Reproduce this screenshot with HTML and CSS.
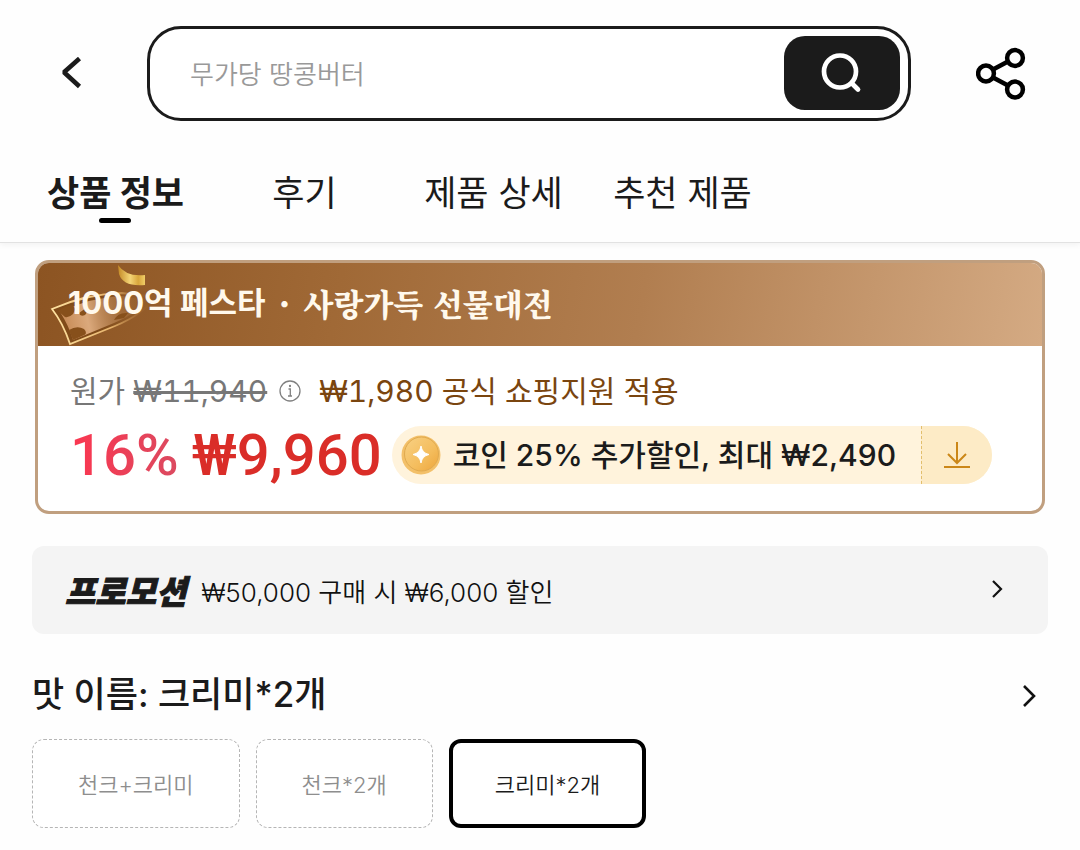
FILE: index.html
```html
<!DOCTYPE html>
<html lang="ko">
<head>
<meta charset="utf-8">
<meta name="viewport" content="width=device-width, initial-scale=1">
<title>상품 정보</title>
<link rel="stylesheet" href="styles.css">
</head>
<body>
<header class="header">
  <div class="topbar">
    <button class="icon-button back" type="button" aria-label="뒤로">
      <svg width="22" height="34" viewBox="0 0 22 34" fill="none" stroke="#1b1b1b" stroke-width="4.600" stroke-linejoin="bevel"><path d="M19.500 1.500 4 15.300 19.500 29.500"/></svg>
    </button>
    <form class="search" role="search">
      <input class="search-input" type="text" placeholder="무가당 땅콩버터" aria-label="검색어">
      <button class="search-button" type="button" aria-label="검색">
        <svg width="42" height="42" viewBox="0 0 42 42" fill="none" stroke="#fff" stroke-width="4.700" stroke-linecap="round"><circle cx="19" cy="19.500" r="16"/><path d="m31.500 32 5.500 5.500"/></svg>
      </button>
    </form>
    <button class="icon-button share" type="button" aria-label="공유">
      <svg width="50" height="54" viewBox="0 0 50 54" fill="none" stroke="#000" stroke-width="4.500"><circle cx="10" cy="26.500" r="7.900"/><circle cx="39" cy="11" r="7.900"/><circle cx="39" cy="42.500" r="7.900"/><path d="m17 22.500 15-8M17 30.500l15 8"/></svg>
    </button>
  </div>
  <nav class="tabs">
    <a class="tab tab-active" href="#info" aria-current="page">상품 정보</a>
    <a class="tab" href="#reviews">후기</a>
    <a class="tab" href="#detail">제품 상세</a>
    <a class="tab" href="#related">추천 제품</a>
  </nav>
</header>
<main class="content">
  <section class="deal" id="info">
    <div class="banner">
      <svg class="banner-art" width="140" height="83" viewBox="0 0 140 83" fill="none" aria-hidden="true">
        <defs>
          <linearGradient id="bill" x1="16" y1="60" x2="110" y2="40" gradientUnits="userSpaceOnUse"><stop stop-color="#c08048"/><stop offset=".35" stop-color="#dba97c"/><stop offset="1" stop-color="#a66c36" stop-opacity="0"/></linearGradient>
          <linearGradient id="edge" x1="14" y1="50" x2="112" y2="45" gradientUnits="userSpaceOnUse"><stop stop-color="#ffe2a0"/><stop offset=".6" stop-color="#e6b36c"/><stop offset="1" stop-color="#a66c36" stop-opacity="0"/></linearGradient>
          <linearGradient id="shade" x1="14" y1="50" x2="112" y2="45" gradientUnits="userSpaceOnUse"><stop stop-color="#804b19"/><stop offset=".5" stop-color="#804b19"/><stop offset="1" stop-color="#93602d" stop-opacity="0"/></linearGradient>
          <linearGradient id="ribbon" x1="80" y1="0" x2="107" y2="0" gradientUnits="userSpaceOnUse"><stop stop-color="#c48a26"/><stop offset=".45" stop-color="#f4d577"/><stop offset=".75" stop-color="#d9a63b"/><stop offset="1" stop-color="#f0ce68"/></linearGradient>
        </defs>
        <path d="M14 46Q48 31 84 30L117 34Q106 51 77 63L32 81Q25 60 14 46Z" fill="url(#shade)"/>
        <path d="M22 49Q54 34 84 33L108 37Q100 50 76 60L35 77Q31 63 22 49Z" fill="url(#bill)"/>
        <path d="M20 48q7-5 14-6 5 3 1 9-4 4-8 3M31 67q8-5 15-1 5 5-2 7l-9 4M41 50q1 4 6 2 3-3 1-7M76 57q4-8 14-7l-4 5" fill="#87501b"/>
        <path d="M14 46Q48 31 84 30L117 34Q106 51 77 63L32 81Q25 60 14 46Z" stroke="url(#edge)" stroke-width="1.800"/>
        <path d="M80 2q8 12 27 10v10Q85 24 81 11Z" fill="url(#ribbon)"/>
      </svg>
      <h2 class="banner-title"><span>1000억 페스타</span><span class="dot">•</span><span class="banner-script">사랑가득 선물대전</span></h2>
    </div>
    <div class="prices">
      <div class="original">
        <span class="original-price">원가 <s>₩11,940</s></span>
        <button class="icon-button info" type="button" aria-label="가격 안내">
          <svg width="22" height="22" viewBox="0 0 22 22" fill="none" stroke="#808080" stroke-width="1.300"><circle cx="11" cy="11" r="10"/><path d="M9.500 9h1.800v7M9 16h4"/><circle cx="11" cy="6" r=".5" fill="#808080"/></svg>
        </button>
        <span class="support">₩1,980 공식 쇼핑지원 적용</span>
      </div>
      <div class="current">
        <span class="discount">16%</span>
        <strong class="sale">₩9,960</strong>
        <div class="coin-pill">
          <svg class="coin" width="40" height="40" viewBox="0 0 40 40" aria-hidden="true">
            <defs><linearGradient id="coin" x1="0" y1="0" x2="1" y2="1"><stop stop-color="#f8d184"/><stop offset=".6" stop-color="#f4bd5d"/><stop offset="1" stop-color="#eda53c"/></linearGradient></defs>
            <circle cx="20" cy="20" r="19.500" fill="#f3c069"/><circle cx="20.500" cy="19" r="17" fill="url(#coin)" stroke="#e0aa50"/>
            <path d="M20 11q1 7 8 8.500-7 1.500-8 8.500-1-7-8-8.500 7-1.500 8-8.500Z" fill="#fff" stroke="#fff" stroke-linejoin="round"/>
          </svg>
          <span class="coin-text">코인 25% 추가할인, 최대 ₩2,490</span>
          <button class="download" type="button" aria-label="쿠폰 받기">
            <svg width="28" height="28" viewBox="0 0 28 28" fill="none" stroke="#cb8718" stroke-width="2"><path d="M14 1v21M5 13l9 9 9-9M1 26h26"/></svg>
          </button>
        </div>
      </div>
    </div>
  </section>
  <a class="promo" href="#promo">
    <strong class="promo-label">프로모션</strong>
    <span class="promo-text">₩50,000 구매 시 ₩6,000 할인</span>
    <svg class="chevron" width="14" height="20" viewBox="0 0 14 20" fill="none" stroke="#111" stroke-width="2.200"><path d="m3 1 8 8-8 8"/></svg>
  </a>
  <section class="options">
    <a class="options-head" href="#options">
      <h2 class="options-title">맛 이름: 크리미*2개</h2>
      <svg class="chevron" width="16" height="26" viewBox="0 0 16 26" fill="none" stroke="#111" stroke-width="2.600"><path d="m3 5 10 10L3 25"/></svg>
    </a>
    <div class="chips">
      <button class="chip" type="button">천크+크리미</button>
      <button class="chip" type="button">천크*2개</button>
      <button class="chip chip-selected" type="button" aria-pressed="true">크리미*2개</button>
    </div>
  </section>
</main>
</body>
</html>
```
FILE: styles.css
```css
* { box-sizing: border-box; }
body {
  margin: 0;
  background: #fefefe;
  color: #1b1b1b;
  font-family: Inter, "Noto Sans CJK KR", sans-serif;
}
button, input { font: inherit; color: inherit; }
button { padding: 0; border: 0; background: none; cursor: pointer; }
a { color: inherit; text-decoration: none; }
h2 { margin: 0; }
svg { display: block; flex: none; }

.header {
  padding-top: 26px;
  border-bottom: 1px solid #e2e2e2;
  box-shadow: 0 2px 6px rgba(0, 0, 0, .05);
}
.topbar {
  display: flex;
  align-items: center;
  padding: 0 54px 0 60px;
}
.icon-button { flex: none; }
.search {
  display: flex;
  flex: 1;
  align-items: center;
  min-width: 0;
  height: 95px;
  margin: 0 65px;
  padding: 0 8px 1px 40px;
  border: 3px solid #1b1b1b;
  border-radius: 34px;
  background: #fff;
}
.search-input {
  flex: 1;
  min-width: 0;
  height: 60px;
  padding: 2px 0 0;
  border: 0;
  outline: 0;
  background: none;
  font-size: 26px;
  font-weight: 350;
}
.search-input::placeholder { color: #999; opacity: 1; }
.search-button {
  display: grid;
  place-items: center;
  width: 116px;
  height: 74px;
  border-radius: 21px;
  background: #1b1b1b;
}
.tabs {
  display: grid;
  grid-template-columns: repeat(4, 1fr);
  width: 70%;
  margin: 45px 0 0 21px;
}
.tab {
  position: relative;
  height: 76px;
  font-size: 35px;
  line-height: 54px;
  text-align: center;
  white-space: nowrap;
}
.tab-active { font-weight: 700; }
.tab-active::after {
  content: "";
  position: absolute;
  top: 52px;
  left: 50%;
  width: 32px;
  height: 5px;
  margin-left: -17px;
  border-radius: 3px;
  background: #000;
}

.content { padding: 17px 32px 20px; }
.deal {
  margin: 0 3px;
  border: 3px solid #c09f7f;
  border-radius: 14px;
  background: #fff;
  overflow: hidden;
}
.banner {
  position: relative;
  padding: 16px 30px 19px;
  background: linear-gradient(100deg, #8c5422 0%, #a06936 30%, #b17e50 60%, #d4aa83 100%);
}
.banner-art { position: absolute; top: 0; left: 0; }
.banner-title {
  position: relative;
  display: flex;
  color: #fff9ed;
  font-size: 31px;
  line-height: 48px;
  white-space: nowrap;
}
.dot { width: 38px; font-size: 20px; text-align: center; }
.banner-script { font-family: "Noto Serif CJK KR", "Noto Sans CJK KR", serif; font-weight: 900; }

.prices { padding: 22px 32px 27px; }
.original {
  display: flex;
  align-items: center;
  font-size: 30px;
  font-variant-numeric: tabular-nums;
  line-height: 46px;
  white-space: nowrap;
}
.original-price { color: #777; }
.info { margin: 0 18px 0 12px; }
.support { color: #7a450f; }
.current {
  display: flex;
  align-items: center;
  margin-top: 12px;
  white-space: nowrap;
}
.discount, .sale {
  font-family: Roboto, "Noto Sans CJK KR", sans-serif;
  font-size: 58px;
  font-weight: 500;
  line-height: 54px;
}
.discount {
  background: linear-gradient(90deg, #fb3650, #db4a60);
  background-clip: text;
  color: transparent;
}
.sale { margin: 0 10px 0 13px; color: #da2d28; }
.coin-pill {
  display: flex;
  align-items: center;
  height: 58px;
  padding-left: 9px;
  border-radius: 29px;
  background: #fff3dc;
  overflow: hidden;
}
.coin-text {
  margin: 0 25px 0 12px;
  font-size: 30px;
  font-weight: 500;
  line-height: 48px;
}
.download {
  display: grid;
  flex: none;
  place-items: center;
  width: 71px;
  height: 58px;
  border-left: 1px dashed #e2be6d;
  background: #fdebc6;
}

.promo {
  display: flex;
  align-items: center;
  height: 88px;
  margin-top: 32px;
  padding: 0 44px 0 33px;
  border-radius: 12px;
  background: #f4f4f4;
  white-space: nowrap;
}
.promo-label {
  font-size: 33px;
  font-weight: 900;
  font-style: italic;
  -webkit-text-stroke: 1px #1b1b1b;
}
.promo-text { margin-left: 15px; color: #111; font-size: 26px; font-weight: 350; }
.chevron { margin-left: auto; }

.options-head {
  display: flex;
  align-items: center;
  margin-top: 33px;
  padding-right: 11px;
}
.options-title { font-size: 35px; line-height: 54px; font-weight: 500; }
.chips { display: flex; gap: 16px; margin-top: 18px; }
.chip {
  height: 89px;
  padding: 0 45px 2px;
  border: 1px dashed #b5b5b5;
  border-radius: 12px;
  background: #fff;
  color: #8e8e8e;
  font-size: 22px;
  font-weight: 350;
  white-space: nowrap;
}
.chip-selected { padding: 0 42px 2px; border: 4px solid #000; color: #1b1b1b; }
```
